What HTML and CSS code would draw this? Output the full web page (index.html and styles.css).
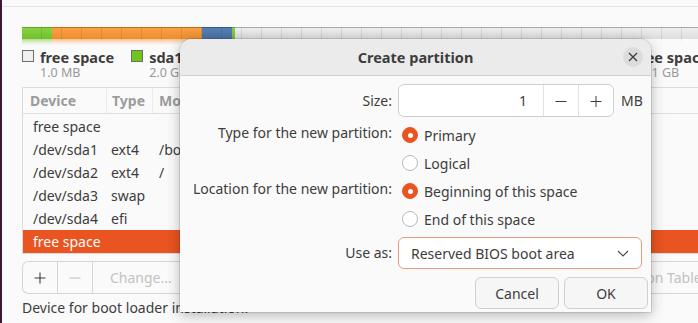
FILE: index.html
```html
<!DOCTYPE html>
<html>
<head>
<meta charset="utf-8">
<link rel="stylesheet" href="styles.css">
</head>
<body>
<div class="screen">
  <div class="strip"></div>
  <div class="main">
    <div class="topline"></div>
    <div class="content">
      <div class="bar">
        <div class="seg seg-green" style="width:30px"></div>
        <div class="seg seg-orange" style="width:150px"></div>
        <div class="seg seg-blue" style="width:30px"></div>
        <div class="seg seg-green" style="width:3px"></div>
        <div class="seg seg-gray grow"></div>
      </div>
      <div class="bar reflect">
        <div class="seg seg-green" style="width:30px"></div>
        <div class="seg seg-orange" style="width:150px"></div>
        <div class="seg seg-blue" style="width:30px"></div>
        <div class="seg seg-green" style="width:3px"></div>
        <div class="seg seg-gray grow"></div>
      </div>
      <div class="legend">
        <div class="litem">
          <span class="swatch sw-free"></span>
          <div class="ltext"><div class="lname">free space</div><div class="lsize">1.0 MB</div></div>
        </div>
        <div class="litem">
          <span class="swatch sw-green"></span>
          <div class="ltext"><div class="lname">sda1 (ext4)</div><div class="lsize">2.0 GB</div></div>
        </div>
        <div class="litem">
          <span class="swatch sw-orange"></span>
          <div class="ltext"><div class="lname">sda2 (ext4)</div><div class="lsize">10.7 GB</div></div>
        </div>
        <div class="litem">
          <span class="swatch sw-blue"></span>
          <div class="ltext"><div class="lname">sda3 (swap)</div><div class="lsize">2.0 GB</div></div>
        </div>
        <div class="litem">
          <span class="swatch sw-green"></span>
          <div class="ltext"><div class="lname">sda4</div><div class="lsize">1 GB</div></div>
        </div>
        <div class="litem last">
          <span class="swatch sw-free"></span>
          <div class="ltext"><div class="lname">free space</div><div class="lsize">21.1 GB</div></div>
        </div>
      </div>
      <div class="table">
        <div class="thead">
          <div class="th c1">Device</div>
          <div class="th c2">Type</div>
          <div class="th c3">Mount point</div>
        </div>
        <div class="tbody">
          <div class="tr"><div class="td c1">free space</div><div class="td c2"></div><div class="td c3"></div></div>
          <div class="tr"><div class="td c1">/dev/sda1</div><div class="td c2">ext4</div><div class="td c3">/boot</div></div>
          <div class="tr"><div class="td c1">/dev/sda2</div><div class="td c2">ext4</div><div class="td c3">/</div></div>
          <div class="tr"><div class="td c1">/dev/sda3</div><div class="td c2">swap</div><div class="td c3"></div></div>
          <div class="tr"><div class="td c1">/dev/sda4</div><div class="td c2">efi</div><div class="td c3"></div></div>
          <div class="tr selected"><div class="td c1">free space</div><div class="td c2"></div><div class="td c3"></div></div>
        </div>
      </div>
      <div class="toolbar">
        <div class="tbtn icon"><svg width="12" height="12" viewBox="0 0 12 12"><path d="M0.5 6H11.5M6 0.5V11.5" stroke="#3d3d3d" stroke-width="1.1" fill="none"/></svg></div>
        <div class="tbtn icon"><svg width="12" height="12" viewBox="0 0 12 12"><path d="M0.5 6H11.5" stroke="#c4c4c4" stroke-width="1.1" fill="none"/></svg></div>
        <div class="tbtn text disabled">Change...</div>
        <div class="tspacer"></div>
        <div class="tbtn text disabled newtable">New Partition Table...</div>
      </div>
      <div class="bootloader">Device for boot loader installation:</div>
    </div>
  </div>

  <div class="dialog">
    <div class="dhead">
      <div class="dtitle">Create partition</div>
      <div class="dclose"><svg width="10" height="10" viewBox="0 0 10 10"><path d="M1 1L9 9M9 1L1 9" stroke="#3d3d3d" stroke-width="1.3" fill="none"/></svg></div>
    </div>
    <div class="dbody">
      <div class="form">
        <div class="flabel size-label">Size:</div>
        <div class="fctrl sizerow">
          <div class="spin">
            <div class="spin-entry">1</div>
            <div class="spin-btn"><svg width="12" height="12" viewBox="0 0 12 12"><path d="M0.5 6.5H11.5" stroke="#3d3d3d" stroke-width="1" fill="none"/></svg></div>
            <div class="spin-btn"><svg width="12" height="12" viewBox="0 0 12 12"><path d="M0.5 6.5H11.5M6 1V12" stroke="#3d3d3d" stroke-width="1" fill="none"/></svg></div>
          </div>
          <div class="unit">MB</div>
        </div>

        <div class="flabel grp-label">Type for the new partition:</div>
        <div class="fctrl radios">
          <div class="radio"><span class="rdot on"></span><span>Primary</span></div>
          <div class="radio"><span class="rdot"></span><span>Logical</span></div>
        </div>

        <div class="flabel grp-label">Location for the new partition:</div>
        <div class="fctrl radios">
          <div class="radio"><span class="rdot on"></span><span>Beginning of this space</span></div>
          <div class="radio"><span class="rdot"></span><span>End of this space</span></div>
        </div>

        <div class="flabel use-label">Use as:</div>
        <div class="fctrl use-ctrl">
          <div class="combo">
            <span>Reserved BIOS boot area</span>
            <svg width="12" height="7" viewBox="0 0 12 7"><path d="M1 1L6 6L11 1" stroke="#4a4a4a" stroke-width="1.1" fill="none"/></svg>
          </div>
        </div>
      </div>
      <div class="actions">
        <div class="btn">Cancel</div>
        <div class="btn">OK</div>
      </div>
    </div>
  </div>
</div>
</body>
</html>
```

FILE: styles.css
```css
* { box-sizing: border-box; }
html, body { margin: 0; padding: 0; }
body {
  width: 698px;
  height: 323px;
  overflow: hidden;
  background: #fafafa;
  font-family: "Noto Sans", "DejaVu Sans", sans-serif;
  font-size: 14px;
  color: #3d3d3d;
}
.screen {
  position: relative;
  display: flex;
  width: 698px;
  height: 323px;
  overflow: hidden;
}
.strip {
  width: 2px;
  flex: none;
  background: #3b1833;
}
.main {
  flex: none;
  width: 820px;
}
.topline {
  margin-top: 6px;
  height: 1px;
  background: #e4e4e4;
}
.content {
  padding-left: 20px;
}
.bar {
  margin-top: 20px;
  height: 12px;
  display: flex;
  position: relative;
}
.bar::after {
  content: "";
  position: absolute;
  inset: 0;
  background: repeating-linear-gradient(to right, transparent 0 19px, rgba(0,0,0,0.09) 19px 20px);
}
.seg { height: 100%; flex: none; }
.seg.grow { flex: 1; }
.seg-green { background: linear-gradient(#5fa626 0 1px, #86d144 1px, #72c12c); }
.seg-orange { background: linear-gradient(#c66e1c 0 1px, #f8a043 1px, #ee8e30); }
.seg-blue { background: linear-gradient(#345a8a 0 1px, #5880b4 1px, #4a72a6); }
.seg-gray { background: linear-gradient(#a9a9a9 0 1px, #eeeeee 1px, #dedede); }
.bar.reflect {
  margin-top: 0;
  height: 6px;
  transform: scaleY(-1);
  opacity: 0.5;
  -webkit-mask-image: linear-gradient(to top, #000, transparent);
  mask-image: linear-gradient(to top, #000, transparent);
}
.bar.reflect .seg-gray { opacity: 0; }
.legend {
  margin-top: 5px;
  display: flex;
  gap: 17px;
}
.litem {
  display: flex;
  gap: 6px;
  flex: none;
}
.litem.last { margin-left: 70px; }
.swatch {
  width: 12px;
  height: 12px;
  border: 1px solid #6e6e6e;
  flex: none;
}
.sw-free { background: #efefef; }
.sw-green { background: #70c51a; }
.sw-orange { background: #f39a3c; }
.sw-blue { background: #4a72a6; }
.lname {
  font-weight: bold;
  font-size: 14.5px;
  line-height: 15px;
}
.lsize {
  font-size: 12.5px;
  line-height: 16px;
  color: #999;
}
.table {
  margin-top: 6px;
  border: 1px solid #dcdcdc;
  border-right: none;
  background: #fafafa;
}
.thead {
  display: flex;
  height: 26px;
  border-bottom: 1px solid #dedede;
  align-items: center;
}
.th {
  font-weight: bold;
  color: #9c9c9c;
  line-height: 25px;
  height: 25px;
}
.thead .c1 { width: 84px; padding-left: 7px; border-right: 1px solid #ececec; }
.thead .c2 { width: 46px; padding-left: 5px; border-right: 1px solid #ececec; }
.thead .c3 { padding-left: 6px; }
.tbody { padding-top: 1px; }
.tr {
  display: flex;
  height: 23px;
  line-height: 23px;
}
.tr .c1 { width: 84px; padding-left: 10px; }
.tr .c2 { width: 47px; padding-left: 4px; }
.tr .c3 { padding-left: 5px; }
.tr.selected { background: #e95420; color: #fff; }
.toolbar {
  margin-top: 7px;
  height: 33px;
  display: flex;
  border: 1px solid #d6d6d6;
  border-right: none;
  border-radius: 6px 0 0 6px;
}
.tbtn {
  display: flex;
  align-items: center;
  justify-content: center;
  border-right: 1px solid #d6d6d6;
}
.tbtn.icon { width: 35px; }
.tbtn.text { padding: 0 17px; width: 120px; justify-content: flex-start; }
.tbtn.disabled { color: #c2c2c2; }
.tspacer { width: 343px; border-right: 1px solid #d6d6d6; }
.tbtn.newtable { width: 200px; padding-left: 18px; border-right: none; }
.bootloader {
  margin-top: 5px;
  line-height: 18px;
}

/* Dialog */
.dialog {
  position: absolute;
  left: 180px;
  top: 39px;
  width: 471px;
  height: 273px;
  background: #fafafa;
  border-radius: 12px 12px 0 0;
  box-shadow: 0 0 0 1px rgba(0,0,0,0.1), 0 3px 14px rgba(0,0,0,0.28);
  display: flex;
  flex-direction: column;
}
.dhead {
  height: 37px;
  flex: none;
  background: #ebebeb;
  border-radius: 12px 12px 0 0;
  border-bottom: 1px solid #d2d2d2;
  display: flex;
  align-items: center;
  justify-content: center;
  position: relative;
}
.dtitle {
  font-weight: bold;
  font-size: 14.5px;
}
.dclose {
  position: absolute;
  right: 8px;
  top: 8px;
  width: 20px;
  height: 20px;
  border-radius: 50%;
  background: #dcdcdc;
  display: flex;
  align-items: center;
  justify-content: center;
}
.dbody {
  flex: 1;
  padding: 8px 3px 3px 6px;
  display: flex;
  flex-direction: column;
}
.form {
  display: grid;
  grid-template-columns: 206px 1fr;
  column-gap: 6px;
  row-gap: 0;
}
.flabel { text-align: right; }
.size-label { line-height: 33px; }
.sizerow { margin-bottom: 4px; }
.grp-label { line-height: 24px; }
.use-label { line-height: 32px; margin-top: 4px; }
.use-ctrl { margin-top: 4px; }
.sizerow { display: flex; align-items: center; gap: 7px; }
.spin {
  width: 216px;
  height: 33px;
  display: flex;
  border: 1px solid #cfcfcf;
  border-radius: 6px;
  background: #fff;
}
.spin-entry {
  flex: 1;
  text-align: right;
  padding-right: 16px;
  line-height: 31px;
}
.spin-btn {
  width: 35px;
  border-left: 1px solid #e2e2e2;
  display: flex;
  align-items: center;
  justify-content: center;
}
.radios { display: flex; flex-direction: column; }
.radio {
  height: 28px;
  display: flex;
  align-items: center;
  gap: 6px;
  padding-left: 4px;
}
.rdot {
  width: 16px;
  height: 16px;
  border-radius: 50%;
  border: 1px solid #b9b9b9;
  background: #fff;
  flex: none;
  position: relative;
}
.rdot.on {
  background: #e95420;
  border-color: #e95420;
}
.rdot.on::after {
  content: "";
  position: absolute;
  left: 4.5px;
  top: 4.5px;
  width: 5px;
  height: 5px;
  border-radius: 50%;
  background: #fff;
}
.combo {
  width: 244px;
  height: 32px;
  border: 1.5px solid #eb9a80;
  border-radius: 6px;
  background: #fff;
  display: flex;
  align-items: center;
  justify-content: space-between;
  padding: 0 12px 0 12px;
}
.actions {
  margin-top: auto;
  display: flex;
  justify-content: flex-end;
  gap: 5px;
}
.btn {
  width: 84px;
  height: 32px;
  border: 1px solid #d0d0d0;
  border-radius: 6px;
  background: #f6f6f6;
  display: flex;
  align-items: center;
  justify-content: center;
}
```
